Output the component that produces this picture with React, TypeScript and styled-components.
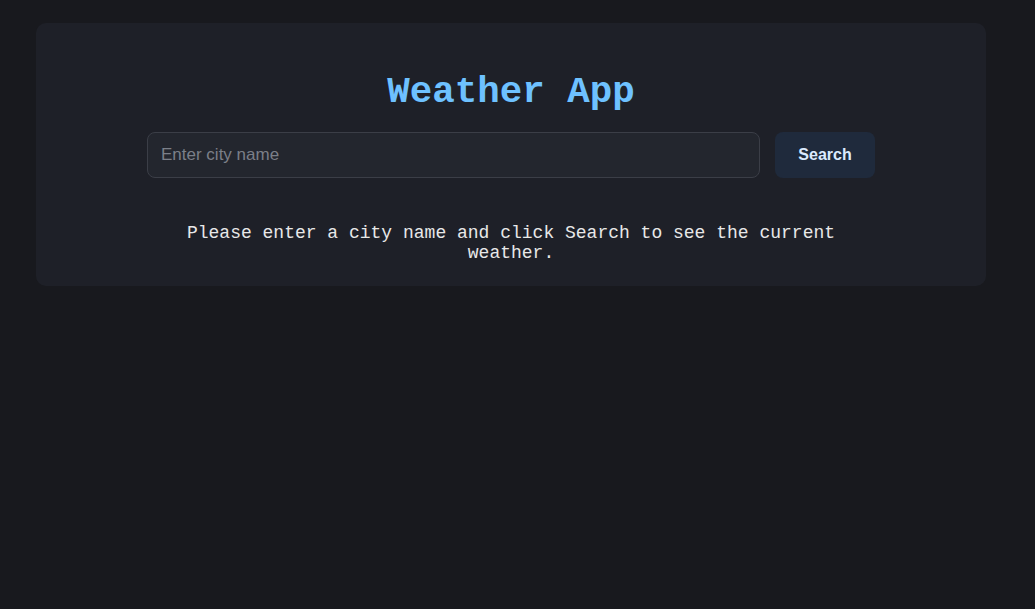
import React from "react";
import styled, { createGlobalStyle } from "styled-components";

const Global = createGlobalStyle`
  html, body {
    margin: 0;
    padding: 0;
    background: #18191e;
  }
  body {
    font-family: "Liberation Sans", Arial, sans-serif;
  }
`;

const Page = styled.div`
  width: 1022px;
  min-height: 609px;
  padding-top: 23px;
  box-sizing: border-box;
`;

const Card = styled.main`
  width: 950px;
  margin: 0 auto;
  box-sizing: border-box;
  padding: 20px 20px 23px;
  background: #1e2028;
  border-radius: 10px;
  display: flex;
  flex-direction: column;
  align-items: center;
`;

const Title = styled.h1`
  margin: 28px 0 19px;
  font-family: "Liberation Mono", "Courier New", monospace;
  font-weight: 700;
  font-size: 37.5px;
  color: #6ec1ff;
  text-align: center;
`;

const Form = styled.form`
  width: 80%;
  display: flex;
  gap: 15px;
`;

const Input = styled.input`
  flex: 1;
  height: 46px;
  box-sizing: border-box;
  padding: 0 13px;
  background: #23262e;
  border: 1px solid #3b3e47;
  border-radius: 8px;
  color: #e5e7eb;
  font-family: "Liberation Sans", Arial, sans-serif;
  font-size: 17px;
  outline: none;
  &::placeholder {
    color: #7b7f88;
  }
`;

const Button = styled.button`
  width: 100px;
  height: 46px;
  border: none;
  border-radius: 8px;
  background: #1f2a3c;
  color: #dbeafe;
  font-family: "Liberation Sans", Arial, sans-serif;
  font-weight: 700;
  font-size: 16px;
  cursor: pointer;
`;

const Message = styled.p`
  width: 80%;
  margin: 45px 0 0;
  font-family: "Liberation Mono", "Courier New", monospace;
  font-size: 18px;
  color: #e8e8e8;
  text-align: center;
`;

export default function App() {
  return (
    <>
      <Global />
      <Page>
        <Card>
          <Title>Weather App</Title>
          <Form onSubmit={(e) => e.preventDefault()}>
            <Input type="text" placeholder="Enter city name" />
            <Button type="submit">Search</Button>
          </Form>
          <Message>
            Please enter a city name and click Search to see the current weather.
          </Message>
        </Card>
      </Page>
    </>
  );
}
